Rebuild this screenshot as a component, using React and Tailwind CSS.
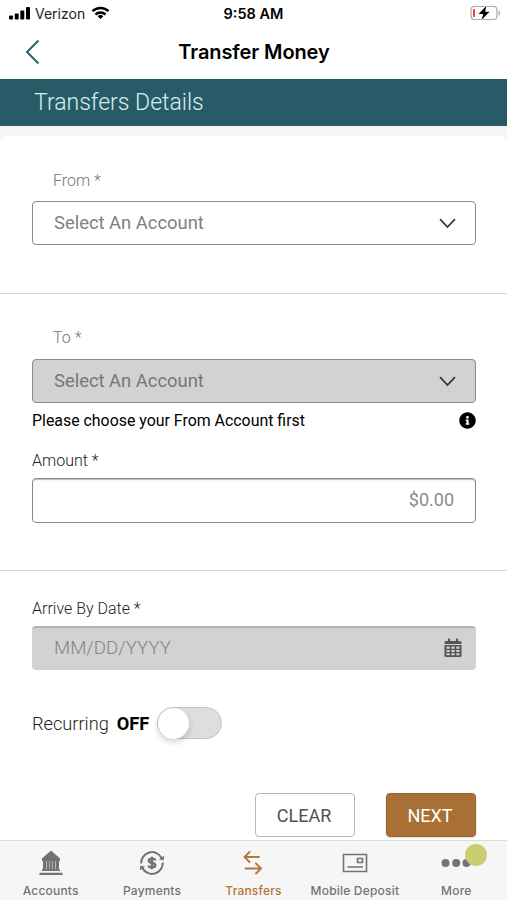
import { FaInfoCircle } from 'react-icons/fa'

const TABS = [
  { label: 'Accounts', icon: BankIcon },
  { label: 'Payments', icon: PaymentIcon },
  { label: 'Transfers', icon: TransferIcon, active: true },
  { label: 'Mobile Deposit', icon: DepositIcon },
  { label: 'More', icon: MoreIcon, badge: true },
]

function BankIcon() {
  return (
    <svg width="24" height="26" viewBox="0 0 24 26" fill="currentColor">
      <path d="M12 0.500L21 8.500V11H3V8.500z" />
      <path d="M4 10h16v10H4z" fillOpacity="0.350" />
      <path d="M4 10h3.200v10H4zM8 10h2.400v10H8zM11 10h2v10h-2zM13.700 10h2.300v10h-2.300zM16.800 10H20v10h-3.200z" />
      <path d="M3 19.200h18v1.800H3zM0.500 22.700h23v2.300H0.500z" />
    </svg>
  )
}

function PaymentIcon() {
  return (
    <svg width="26" height="26" viewBox="0 0 26 26" fill="none" stroke="currentColor" strokeWidth="2">
      <path d="M2.200 13.500A10.800 10.800 0 0 1 22.600 8" />
      <path d="M23.800 12.500A10.800 10.800 0 0 1 3.400 18" />
      <path d="M25.200 5.800l-.6 4.600-4.700-1.200zM.8 20.200l.6-4.600 4.700 1.200z" fill="currentColor" stroke="none" />
      <path d="M16.200 10.500c0-1.300-1.400-1.900-3.200-1.900s-3.200.7-3.200 2.100c0 3.100 6.500 1.500 6.500 4.600 0 1.500-1.500 2.100-3.300 2.100s-3.300-.6-3.300-2M13 6.700v12.600" strokeWidth="2.400" />
    </svg>
  )
}

function TransferIcon() {
  return (
    <svg width="22" height="26" viewBox="0 0 22 26" fill="none" stroke="currentColor" strokeWidth="1.900" strokeLinecap="round">
      <path d="M17 7H2.500M7.500 2l-5 5 5 5M3.500 18.500h15.500M14 13.500l5 5-5 5" />
    </svg>
  )
}

function DepositIcon() {
  return (
    <svg width="26" height="20" viewBox="0 0 26 20" fill="none" stroke="currentColor" strokeWidth="1.600">
      <path d="M1.500 1.500h23v17h-23zM15.500 5.500h5v4h-5zM5.500 14h15.500" />
    </svg>
  )
}

function MoreIcon() {
  return (
    <svg width="30" height="10" viewBox="0 0 30 10" fill="currentColor">
      <circle cx="4.500" cy="5" r="4" />
      <circle cx="15.200" cy="5" r="4" />
      <circle cx="25.500" cy="5" r="4" />
    </svg>
  )
}

function StatusBar() {
  return (
    <div className="grid h-[26px] grid-cols-3 items-center pr-[6px] pl-2 text-black">
      <div className="flex items-center">
        <svg width="23" height="14" viewBox="0 0 23 14" fill="currentColor">
          <rect x="1" y="9.500" width="4" height="4" rx="1" />
          <rect x="6.700" y="7.500" width="4" height="6" rx="1" />
          <rect x="12.300" y="4.500" width="4" height="9" rx="1" />
          <rect x="18" y="1" width="4" height="12.500" rx="1" />
        </svg>
        <span className="ml-1 text-[14px] text-[#222]">Verizon</span>
        <svg className="ml-[6px]" width="19" height="14" viewBox="0 0 18 14" fill="none" stroke="currentColor" strokeWidth="2.500">
          <path d="M1 5.200a11.500 11.500 0 0 1 16 0M4 8.500a7.200 7.200 0 0 1 10 0" />
          <path d="M9 13l-2.800-2.800a4 4 0 0 1 5.600 0z" fill="currentColor" stroke="none" />
        </svg>
      </div>
      <span className="pt-0.5 pr-0.5 text-center text-[14.500px] font-semibold">9:58 AM</span>
      <svg className="justify-self-end" width="31" height="16" viewBox="0 0 31 16">
        <rect x="1" y="1.500" width="26" height="13" rx="3.500" fill="none" stroke="#aaa" strokeWidth="1.200" />
        <path d="M28.500 5.500c2 .5 2 4.500 0 5z" fill="#aaa" />
        <rect x="3" y="4" width="2" height="8" rx="0.500" fill="#f0463c" />
        <path d="M16.500 0.800L8.500 9h4.800l-2 6.200L19.500 6.800H15z" fill="#000" stroke="#fff" strokeWidth="1.500" paintOrder="stroke" />
      </svg>
    </div>
  )
}

function Chevron() {
  return (
    <svg width="17" height="11" viewBox="0 0 17 11" fill="none" stroke="#333" strokeWidth="1.700" strokeLinecap="round">
      <path d="M1.500 1.700L8.500 9l7-7.300" />
    </svg>
  )
}

function Select({ disabled }) {
  return (
    <button
      disabled={disabled}
      className={`flex h-11 w-full items-center justify-between rounded border-[1.500px] border-[#8c8c8c] pr-[19px] pl-[21px] text-[18.400px] ${disabled ? 'bg-[#d2d2d2] text-[#777]' : 'bg-white text-[#808080]'}`}
    >
      <span>Select An Account</span>
      <Chevron />
    </button>
  )
}

function CalendarIcon() {
  return (
    <svg width="18" height="20" viewBox="0 0 18 20">
      <path d="M4 .5h2v2.500h6V.5h2V3h2a1.500 1.500 0 0 1 1.500 1.500V6H.5V4.500A1.500 1.500 0 0 1 2 3h2z" fill="#555" />
      <path d="M.5 7h17v10.500a1.500 1.500 0 0 1-1.500 1.500H2A1.500 1.500 0 0 1 .5 17.500z" fill="#555" />
      <path d="M2.500 8.500h3.200v2.200H2.500zM7.400 8.500h3.200v2.200H7.400zM12.300 8.500h3.200v2.200h-3.200zM2.500 12h3.200v2H2.500zM7.400 12h3.200v2H7.400zM12.300 12h3.200v2h-3.200zM2.500 15.300h3.200v1.900H2.500zM7.400 15.300h3.200v1.900H7.400zM12.300 15.300h3.200v1.900h-3.200z" fill="#d2d2d2" />
    </svg>
  )
}

function TabBar() {
  return (
    <nav className="grid h-[60px] shrink-0 grid-cols-5 border-t border-[#dedede] bg-[#f6f6f6] font-[Inter,sans-serif]">
      {TABS.map(({ label, icon: Icon, active, badge }) => (
        <div key={label} className={`flex flex-col items-center ${active ? 'text-[#b5763a]' : 'text-[#737373]'}`}>
          <div className="relative mt-2 flex h-7 items-center justify-center">
            <Icon />
            {badge && <span className="absolute top-[-5px] right-[-16px] size-[22px] rounded-full bg-[#c9ce72]" />}
          </div>
          <span className="mt-[6px] text-xs leading-4 font-medium tracking-[0.200px] whitespace-nowrap">{label}</span>
        </div>
      ))}
    </nav>
  )
}

export default function App() {
  return (
    <div className="flex h-[900px] w-[507px] flex-col overflow-hidden bg-white font-[Roboto,sans-serif]">
      <header className="h-[79px] shrink-0 font-[Inter,sans-serif]">
        <StatusBar />
        <div className="grid h-[52px] grid-cols-[60px_1fr_60px] items-center">
          <svg className="ml-6" width="17" height="26" viewBox="0 0 17 26" fill="none" stroke="#2b626b" strokeWidth="2">
            <path d="M14.500 1.500L3 13l11.500 11.500" />
          </svg>
          <h1 className="pl-px text-center text-[20px] font-semibold tracking-[-0.100px] text-black">Transfer Money</h1>
        </div>
      </header>

      <div className="flex h-[47px] shrink-0 items-center bg-[#275b67] pt-0.5 pl-[34px]">
        <h2 className="text-[23px] font-light text-[#d9edf0]">Transfers Details</h2>
      </div>

      <main className="flex-1 bg-[#f5f5f5] pt-[10px]">
        <div className="h-full rounded-t-md bg-white">
          <section className="h-[158px] border-b border-[#d6d6d6] pt-[33px] pr-[31px] pl-8">
            <label className="mb-[9px] block pt-px pl-[21px] text-[16px] leading-[22px] font-light text-[#777]">From *</label>
            <Select />
          </section>

          <section className="h-[277px] border-b border-[#d6d6d6] pt-[33px] pr-[31px] pl-8">
            <label className="mb-[10px] block pl-[21px] text-[16px] leading-[22px] font-light text-[#777]">To *</label>
            <Select disabled />
            <div className="mt-[6px] flex h-[22px] items-center justify-between text-[15.900px] text-black">
              <span className="pt-px">Please choose your From Account first</span>
              <FaInfoCircle size={17} />
            </div>
            <label className="mt-[19px] block text-[16px] leading-[22px] font-light text-[#222]">Amount *</label>
            <input
              className="mt-[6px] block h-[45px] w-full rounded border-[1.500px] border-[#8c8c8c] pr-[21px] pb-0.5 pl-[21px] text-right text-[18px] shadow-[inset_0_1px_1px_#bbb] placeholder:text-[#8b8b8b]"
              placeholder="$0.00"
            />
          </section>

          <section className="pt-[27px] pr-[31px] pl-8">
            <label className="block text-[16px] leading-[22px] font-light text-[#222]">Arrive By Date *</label>
            <div className="mt-[6px] flex h-11 items-center justify-between rounded border-t-2 border-[#b5b5b5] bg-[#d2d2d2] pr-[14px] pb-0.5 pl-[22px] text-[18.700px] font-light text-[#858585]">
              <span>MM/DD/YYYY</span>
              <CalendarIcon />
            </div>
            <div className="mt-[37px] flex h-8 items-center text-[18.200px]">
              <span className="pt-px font-light text-[#222]">Recurring</span>
              <strong className="ml-2 pt-px font-bold text-black">OFF</strong>
              <button className="ml-2 h-8 w-[65px] rounded-full border border-[#c5c5c5] bg-[#dedede]">
                <span className="block size-[31px] rounded-full bg-white shadow-[0_3px_6px_rgba(0,0,0,0.18)]" />
              </button>
            </div>
            <div className="mt-[54px] flex justify-end gap-[31px] text-[18px]">
              <button className="h-11 w-[100px] rounded border border-[#b5b5b5] bg-white pr-0.5 text-[#505050]">CLEAR</button>
              <button className="h-11 w-[90px] rounded border border-[#97622c] bg-[#a97035] pr-0.5 text-white shadow-sm">NEXT</button>
            </div>
          </section>
        </div>
      </main>

      <TabBar />
    </div>
  )
}
